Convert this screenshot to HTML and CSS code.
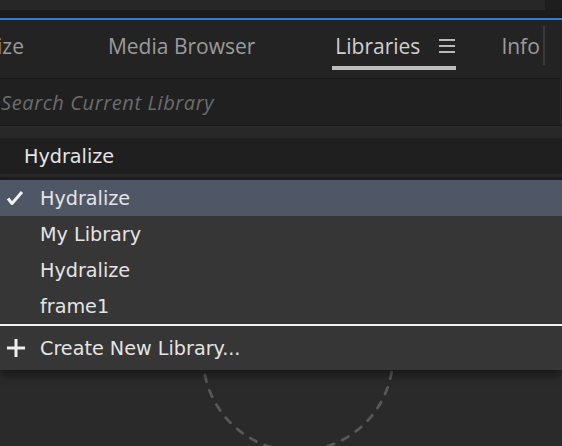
FILE: index.html
```html
<!DOCTYPE html>
<html>
<head>
<meta charset="utf-8">
<link rel="stylesheet" href="styles.css">
</head>
<body>
<div class="panel">
  <div class="topstrip"><div class="topmain"></div><div class="topside"></div></div>
  <div class="darkstrip"></div>
  <div class="focusline"></div>
  <div class="tabs">
    <div class="tab tab-cut">ize</div>
    <div class="tab tab-media">Media Browser</div>
    <div class="tab tab-active">
      <span>Libraries</span>
      <svg class="hamburger" width="16" height="14" viewBox="0 0 16 14"><rect x="0" y="0" width="16" height="2"/><rect x="0" y="6" width="16" height="2"/><rect x="0" y="12" width="16" height="2"/></svg>
    </div>
    <div class="tab tab-info">Info</div>
    <div class="tabsep"></div>
  </div>
  <div class="search"><span class="placeholder">Search Current Library</span><span class="search-edge"></span></div>
  <div class="spacer"></div>
  <div class="select">Hydralize</div>
  <div class="content">
    <svg class="placeholder-ring" width="200" height="200" viewBox="0 0 200 200"><circle cx="100" cy="100" r="95" fill="none" stroke="#585858" stroke-width="2.8" stroke-dasharray="7 9" stroke-linecap="round"/></svg>
    <div class="menu">
      <div class="item selected">
        <svg class="check" width="18" height="16" viewBox="0 0 18 16"><polyline points="2,8.5 6,13.5 16,2" fill="none" stroke="#f2f2f2" stroke-width="3" stroke-linejoin="round"/></svg>
        <span>Hydralize</span>
      </div>
      <div class="item"><span>My Library</span></div>
      <div class="item"><span>Hydralize</span></div>
      <div class="item"><span>frame1</span></div>
      <div class="item create">
        <svg class="plus" width="18" height="18" viewBox="0 0 18 18"><rect x="0" y="7.5" width="18" height="3"/><rect x="7.5" y="0" width="3" height="18"/></svg>
        <span>Create New Library...</span>
      </div>
    </div>
  </div>
</div>
</body>
</html>
```
FILE: styles.css
```css
html, body {
  margin: 0;
  padding: 0;
}
body {
  width: 562px;
  height: 446px;
  overflow: hidden;
  background: #2a2a2a;
}
.panel {
  display: flex;
  flex-direction: column;
  height: 446px;
}
.topstrip {
  height: 10px;
  display: flex;
}
.topmain {
  flex: 1;
  background: #272727;
}
.topside {
  width: 17px;
  background: #1e1e1e;
}
.darkstrip {
  height: 8px;
  background: #1b1b1b;
}
.focusline {
  height: 2px;
  background: #2e7fd6;
}
.tabs {
  height: 58px;
  background: #232323;
  border-bottom: 1px solid #1a1a1a;
  display: flex;
  align-items: flex-start;
  font-family: "Open Sans", sans-serif;
  font-size: 21px;
  color: #9b9b9b;
  white-space: nowrap;
}
.tab {
  margin-top: 14px;
  line-height: 24px;
}
.tab-cut {
  margin-left: -3px;
}
.tab-media {
  margin-left: 84px;
}
.tab-active {
  margin-left: 77px;
  display: flex;
  align-items: center;
  gap: 19px;
  padding: 0 1px 8px 3px;
  border-bottom: 4px solid #bdbdbd;
  color: #cfcfcf;
}
.hamburger {
  fill: #b8b8b8;
}
.tab-info {
  margin-left: 45px;
}
.tabsep {
  width: 2px;
  height: 39px;
  margin-top: 6px;
  margin-left: 3px;
  background: #3a3a3a;
}
.search {
  height: 46px;
  background: #202020;
  border-bottom: 1px solid #191919;
  display: flex;
  align-items: center;
  justify-content: space-between;
}
.placeholder {
  margin-left: 1px;
  font-family: "Open Sans", sans-serif;
  font-style: italic;
  font-size: 20px;
  letter-spacing: 0.6px;
  color: #6c6c6c;
}
.search-edge {
  width: 1px;
  height: 46px;
  margin-right: 1px;
  background: #2b2b2b;
}
.spacer {
  height: 12px;
  background: #282828;
}
.select {
  height: 36px;
  line-height: 36px;
  padding-left: 24px;
  padding-top: 1px;
  box-sizing: border-box;
  background: #1f1f1f;
  font-family: "DejaVu Sans", sans-serif;
  font-size: 19.2px;
  color: #e4e4e4;
}
.content {
  flex: 1;
  position: relative;
  background: #2a2a2a;
}
.placeholder-ring {
  position: absolute;
  left: 198px;
  top: 82px;
}
.menu {
  position: absolute;
  top: 3px;
  left: 0;
  right: 0;
  background: #363636;
  border-top: 3px solid #1c1b20;
  box-shadow: 0 5px 9px rgba(0, 0, 0, 0.45);
  font-family: "DejaVu Sans", sans-serif;
  font-size: 19.2px;
  color: #e4e4e4;
}
.item {
  height: 36px;
  display: flex;
  align-items: center;
  padding-left: 40px;
  padding-top: 1px;
  box-sizing: border-box;
  position: relative;
  white-space: nowrap;
}
.item.selected {
  background: #4f5767;
}
.check {
  position: absolute;
  left: 6px;
  top: 10px;
}
.item.create {
  height: 46px;
  border-top: 2px solid #f2f2f2;
}
.plus {
  position: absolute;
  left: 7px;
  top: 13px;
  fill: #f0f0f0;
}
```
